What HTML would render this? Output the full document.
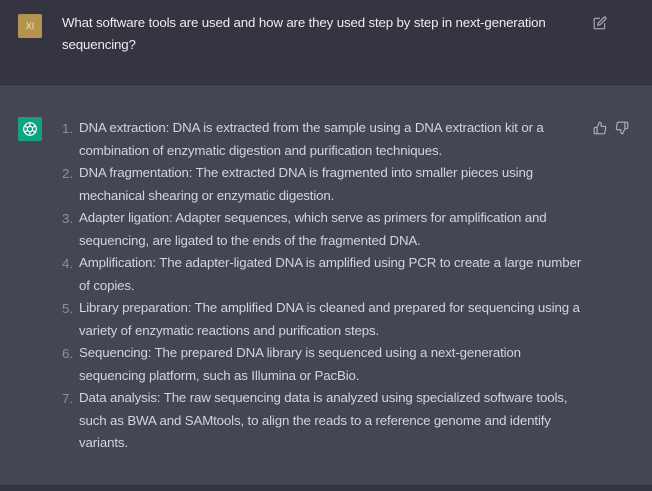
<!DOCTYPE html>
<html><head><style>
body{margin:0;width:652px;height:491px;overflow:hidden;background:#444654;font-family:"Liberation Sans",sans-serif;}
.top{position:absolute;left:0;top:0;width:652px;height:84px;background:#343541;border-bottom:1px solid #2a2b32;}
.bot{position:absolute;left:0;top:485px;width:652px;height:6px;background:#343541;}
.av{position:absolute;left:18px;width:24px;height:24px;border-radius:2px;}
.t{position:absolute;white-space:nowrap;font-size:13.3px;letter-spacing:-0.15px;}
.u{left:62px;color:#ececf1;line-height:22px;}
.l{left:79px;color:#d1d5db;line-height:22.5px;}
.n{position:absolute;left:62px;color:#8e8ea0;font-size:13.3px;}
</style></head><body>
<div class="top"></div>
<div class="av" style="top:14px;background:#b4944f;color:#f0e6d0;font-size:9px;text-align:center;line-height:24px;">XI</div>
<div class="t u" style="top:12px;">What software tools are used and how are they used step by step in next-generation<br>sequencing?</div>
<svg style="position:absolute;left:593px;top:16px" width="14" height="14" viewBox="0 0 24 24" fill="none" stroke="#acacbe" stroke-width="2" stroke-linecap="round" stroke-linejoin="round"><path d="M11 4H4a2 2 0 0 0-2 2v14a2 2 0 0 0 2 2h14a2 2 0 0 0 2-2v-7"/><path d="M18.5 2.5a2.1 2.1 0 0 1 3 3L12 15l-4 1 1-4 9.5-9.5z"/></svg>
<div class="av" style="top:117px;background:#10a37f;"></div>
<svg style="position:absolute;left:22px;top:121px" width="16" height="16" viewBox="0 0 16 16" fill="none" stroke="#fff" stroke-width="1.2"><circle cx="8" cy="8" r="6.3"/><circle cx="8" cy="8" r="2.6"/><path d="M8 1.7v3.7M8 10.6v3.7M2.5 4.8l3.2 1.9M10.3 9.3l3.2 1.9M2.5 11.2l3.2-1.9M10.3 6.7l3.2-1.9"/></svg>
<svg style="position:absolute;left:593px;top:121px" width="14" height="14" viewBox="0 0 24 24" fill="none" stroke="#acacbe" stroke-width="2" stroke-linecap="round" stroke-linejoin="round"><path d="M14 9V5a3 3 0 0 0-3-3l-4 9v11h11.3a2 2 0 0 0 2-1.7l1.4-9a2 2 0 0 0-2-2.3zM7 22H4a2 2 0 0 1-2-2v-7a2 2 0 0 1 2-2h3"/></svg>
<svg style="position:absolute;left:615px;top:121px" width="14" height="14" viewBox="0 0 24 24" fill="none" stroke="#acacbe" stroke-width="2" stroke-linecap="round" stroke-linejoin="round"><path d="M10 15v4a3 3 0 0 0 3 3l4-9V2H5.7a2 2 0 0 0-2 1.7l-1.4 9a2 2 0 0 0 2 2.3zm7-13h2.7A2.3 2.3 0 0 1 22 4v7a2.3 2.3 0 0 1-2.3 2H17"/></svg>
<div class="n" style="top:121px">1.</div>
<div class="t l" style="top:117px">DNA extraction: DNA is extracted from the sample using a DNA extraction kit or a<br>combination of enzymatic digestion and purification techniques.</div>
<div class="n" style="top:166px">2.</div>
<div class="t l" style="top:162px">DNA fragmentation: The extracted DNA is fragmented into smaller pieces using<br>mechanical shearing or enzymatic digestion.</div>
<div class="n" style="top:211px">3.</div>
<div class="t l" style="top:207px">Adapter ligation: Adapter sequences, which serve as primers for amplification and<br>sequencing, are ligated to the ends of the fragmented DNA.</div>
<div class="n" style="top:256px">4.</div>
<div class="t l" style="top:252px">Amplification: The adapter-ligated DNA is amplified using PCR to create a large number<br>of copies.</div>
<div class="n" style="top:301px">5.</div>
<div class="t l" style="top:297px">Library preparation: The amplified DNA is cleaned and prepared for sequencing using a<br>variety of enzymatic reactions and purification steps.</div>
<div class="n" style="top:346px">6.</div>
<div class="t l" style="top:342px">Sequencing: The prepared DNA library is sequenced using a next-generation<br>sequencing platform, such as Illumina or PacBio.</div>
<div class="n" style="top:391px">7.</div>
<div class="t l" style="top:387px">Data analysis: The raw sequencing data is analyzed using specialized software tools,<br>such as BWA and SAMtools, to align the reads to a reference genome and identify<br>variants.</div>
<div class="bot"></div>
</body></html>
